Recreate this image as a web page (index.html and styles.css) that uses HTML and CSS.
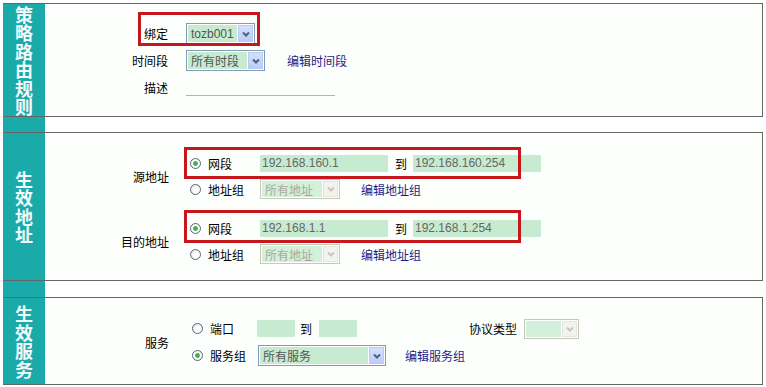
FILE: index.html
```html
<!DOCTYPE html>
<html lang="zh-CN">
<head>
    <meta charset="UTF-8">
    <meta name="viewport" content="width=device-width, initial-scale=1.0">
    <title>策略路由规则</title>
    <link rel="stylesheet" href="styles.css">
</head>
<body>
    <div class="page">
        <!-- 策略路由规则 -->
        <section class="panel">
            <div class="side"><span class="side-title">策略路由规则</span></div>
            <div class="panel-body rule-body">
                <div class="field-label">绑定</div>
                <div class="field">
                    <span class="select select-bind">
                        <span class="select-val">tozb001</span>
                        <span class="select-btn"><svg viewBox="0 0 10 10"><path d="M2 3.5 L5 6.5 L8 3.5"/></svg></span>
                    </span>
                </div>

                <div class="field-label">时间段</div>
                <div class="field">
                    <span class="select select-time">
                        <span class="select-val">所有时段</span>
                        <span class="select-btn"><svg viewBox="0 0 10 10"><path d="M2 3.5 L5 6.5 L8 3.5"/></svg></span>
                    </span>
                    <a class="link link-time" href="#">编辑时间段</a>
                </div>

                <div class="field-label">描述</div>
                <div class="field"><input class="desc-input" type="text"></div>

                <div class="mark mark-bind"></div>
            </div>
        </section>

        <div class="spacer"><div class="side"></div></div>

        <!-- 生效地址 -->
        <section class="panel">
            <div class="side"><span class="side-title">生效地址</span></div>
            <div class="panel-body addr-body">
                <div class="group">
                    <div class="field-label">源地址</div>
                    <div class="opts">
                        <div class="opt-row">
                            <label class="opt"><span class="radio checked"></span>网段</label>
                            <input class="ip" type="text" value="192.168.160.1">
                            <span class="to">到</span>
                            <input class="ip" type="text" value="192.168.160.254">
                        </div>
                        <div class="opt-row">
                            <label class="opt"><span class="radio"></span>地址组</label>
                            <span class="select select-addr disabled">
                                <span class="select-val">所有地址</span>
                                <span class="select-btn"><svg viewBox="0 0 10 10"><path d="M2 3.5 L5 6.5 L8 3.5"/></svg></span>
                            </span>
                            <a class="link link-addr" href="#">编辑地址组</a>
                        </div>
                    </div>
                </div>

                <div class="group">
                    <div class="field-label">目的地址</div>
                    <div class="opts">
                        <div class="opt-row">
                            <label class="opt"><span class="radio checked"></span>网段</label>
                            <input class="ip" type="text" value="192.168.1.1">
                            <span class="to">到</span>
                            <input class="ip" type="text" value="192.168.1.254">
                        </div>
                        <div class="opt-row">
                            <label class="opt"><span class="radio"></span>地址组</label>
                            <span class="select select-addr disabled">
                                <span class="select-val">所有地址</span>
                                <span class="select-btn"><svg viewBox="0 0 10 10"><path d="M2 3.5 L5 6.5 L8 3.5"/></svg></span>
                            </span>
                            <a class="link link-addr" href="#">编辑地址组</a>
                        </div>
                    </div>
                </div>

                <div class="mark mark-src"></div>
                <div class="mark mark-dst"></div>
            </div>
        </section>

        <div class="spacer spacer-low"><div class="side"></div></div>

        <!-- 生效服务 -->
        <section class="panel">
            <div class="side"><span class="side-title">生效服务</span></div>
            <div class="panel-body svc-body">
                <div class="group">
                    <div class="field-label">服务</div>
                    <div class="opts svc-opts">
                        <div class="opt-row">
                            <label class="opt opt-port"><span class="radio"></span>端口</label>
                            <input class="port" type="text">
                            <span class="to to-port">到</span>
                            <input class="port" type="text">
                            <span class="proto-label">协议类型</span>
                            <span class="select select-proto disabled">
                                <span class="select-val"></span>
                                <span class="select-btn"><svg viewBox="0 0 10 10"><path d="M2 3.5 L5 6.5 L8 3.5"/></svg></span>
                            </span>
                        </div>
                        <div class="opt-row">
                            <label class="opt opt-svc"><span class="radio checked"></span>服务组</label>
                            <span class="select select-svc">
                                <span class="select-val">所有服务</span>
                                <span class="select-btn"><svg viewBox="0 0 10 10"><path d="M2 3.5 L5 6.5 L8 3.5"/></svg></span>
                            </span>
                            <a class="link link-svc" href="#">编辑服务组</a>
                        </div>
                    </div>
                </div>
            </div>
        </section>
    </div>
</body>
</html>
```

FILE: styles.css
```css
body {
    margin: 0;
    padding: 3px 0 0 3px;
    background-color: #fff;
    font-family: "Liberation Sans", "Noto Sans CJK SC", sans-serif;
    font-size: 12px;
    color: #000;
}
.page {
    width: 760px;
}
.panel {
    display: flex;
    border-top: 1px solid #666;
    border-bottom: 1px solid #666;
    border-right: 1px solid #666;
}
.side {
    width: 42px;
    flex: none;
    background-color: #19aaa9;
    display: flex;
    align-items: center;
    justify-content: center;
}
.side-title {
    width: 18px;
    font-family: "Noto Sans CJK SC", sans-serif;
    font-size: 18px;
    font-weight: bold;
    line-height: 18.5px;
    color: #f2fbfb;
    text-align: center;
}
.spacer {
    display: flex;
    height: 15px;
}
.spacer-low {
    height: 16px;
}
.panel-body {
    flex: 1;
    position: relative;
    background-color: #fdfffd;
}
.field-label {
    text-align: right;
    white-space: nowrap;
}
.field {
    display: flex;
    align-items: center;
}

/* rule panel */
.rule-body {
    display: grid;
    grid-template-columns: 123px auto;
    grid-auto-rows: 27px;
    column-gap: 18px;
    align-items: center;
    align-content: start;
    padding: 16px 0 15px;
}
.desc-input {
    width: 149px;
    height: 16px;
    box-sizing: border-box;
    border: none;
    border-bottom: 1px solid #b4b4b4;
    background: transparent;
    padding: 0;
    outline: none;
}

/* fake selects */
.select {
    display: flex;
    box-sizing: border-box;
    border: 1px solid #7f9db9;
    background-color: #fff;
    padding: 1px;
    gap: 1px;
}
.select-val {
    flex: 1;
    background-color: #c6ebd0;
    color: #555;
    padding-left: 3px;
    display: flex;
    align-items: center;
    white-space: nowrap;
    overflow: hidden;
}
.select-btn {
    width: 15px;
    flex: none;
    border: 1px solid #b9c9ef;
    box-sizing: border-box;
    background: linear-gradient(#d4e0fd, #bccdf7);
    display: flex;
    align-items: center;
    justify-content: center;
}
.select-btn svg {
    width: 10px;
    height: 10px;
}
.select-btn path {
    fill: none;
    stroke: #4d6185;
    stroke-width: 2;
}
.select.disabled {
    border-color: #c9c7ba;
}
.select.disabled .select-val {
    background-color: #d3f0da;
    color: #aca899;
}
.select.disabled .select-btn {
    border-color: #e6e5dc;
    background: #f2f2ee;
}
.select.disabled .select-btn path {
    stroke: #c9c7ba;
}
.select-bind {
    width: 69px;
    height: 21px;
}
.select-time {
    width: 79px;
    height: 21px;
}
.select-addr {
    width: 80px;
    height: 20px;
}
.select-proto {
    width: 55px;
    height: 20px;
    margin-left: 7px;
}
.select-svc {
    width: 128px;
    height: 21px;
}

.link {
    color: #1c1c8a;
    text-decoration: none;
    white-space: nowrap;
}
.link-time {
    margin-left: 22px;
}
.link-addr {
    margin-left: 21px;
}
.link-svc {
    margin-left: 19px;
}

/* address + service panels */
.addr-body {
    padding: 17px 0 0;
    height: 147px;
    box-sizing: border-box;
}
.svc-body {
    padding: 17px 0 0;
    height: 86px;
    box-sizing: border-box;
}
.group {
    display: grid;
    grid-template-columns: 124px auto;
    column-gap: 17px;
    align-items: center;
    margin-bottom: 13px;
}
.opt-row {
    display: flex;
    align-items: center;
    height: 26px;
}
.svc-opts .opt-row {
    height: 27px;
}
.opt {
    display: flex;
    align-items: center;
    width: 74px;
    flex: none;
    white-space: nowrap;
}
.opt-port {
    width: 71px;
}
.opt-svc {
    width: 72px;
}
.radio {
    width: 11px;
    height: 11px;
    box-sizing: border-box;
    border: 1px solid #56687c;
    border-radius: 50%;
    background: radial-gradient(circle at 60% 60%, #fff 30%, #dcdcd6 100%);
    margin: 0 7px 0 4px;
    flex: none;
}
.opt-port .radio,
.opt-svc .radio {
    margin-left: 6px;
}
.radio.checked {
    background: radial-gradient(circle, #2fa13a 0, #4cc155 2px, #fff 3px, #ececE6 100%);
}
.ip,
.port {
    font: inherit;
    color: #666;
    border: none;
    outline: none;
    background-color: #c6ebd0;
    box-sizing: border-box;
    height: 17px;
    padding: 0 2px;
}
.ip {
    width: 128px;
}
.port {
    width: 38px;
}
.to {
    margin: 0 6px 0 7px;
}
.to-port {
    margin: 0 7px 0 5px;
}
.proto-label {
    margin-left: 112px;
}

/* red annotation frames */
.mark {
    position: absolute;
    box-sizing: border-box;
    border: 3px solid #c8161d;
    pointer-events: none;
}
.mark-bind {
    left: 93px;
    top: 8px;
    width: 122px;
    height: 34px;
}
.mark-src {
    left: 139px;
    top: 14px;
    width: 337px;
    height: 32px;
}
.mark-dst {
    left: 139px;
    top: 77px;
    width: 337px;
    height: 33px;
}
```
